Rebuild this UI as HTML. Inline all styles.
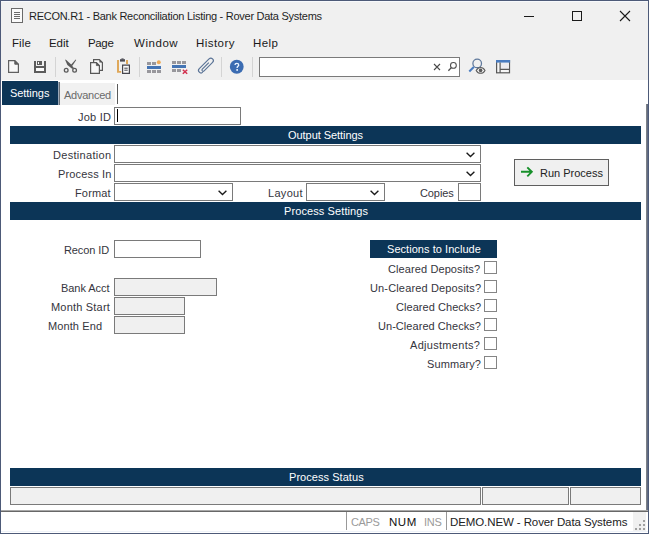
<!DOCTYPE html>
<html><head><meta charset="utf-8">
<style>
*{box-sizing:border-box}
html,body{margin:0;padding:0;width:649px;height:534px;overflow:hidden;background:#fff}
body{position:relative;font-family:"Liberation Sans",sans-serif;font-size:11px;line-height:13px;color:#35353d}
.a{position:absolute}
.t{position:absolute;white-space:nowrap;font-size:11px;line-height:13px}
.r{text-align:right}
.bar{position:absolute;background:#0c3557;color:#fff}
.in{position:absolute;border:1px solid #7a7a7a;background:#fff}
.ro{background:#f0f0f0}
.cb{position:absolute;width:13px;height:13px;border:1px solid #858585;background:#fff;left:484px}
.sep{position:absolute;width:1px;background:#d4d4d4;top:57px;height:20px}
.chev{position:absolute;width:10px;height:6px;overflow:visible}
</style></head><body>
<!-- window chrome -->
<div class="a" style="left:0;top:0;width:649px;height:80px;background:#f0f0f0"></div>
<div class="a" style="left:0;top:0;width:649px;height:534px;border:1px solid #4d5a78"></div>
<div class="a" style="left:1px;top:1px;width:647px;height:1px;background:#f7f9fc"></div>

<!-- title -->
<svg class="a" style="left:11px;top:8px" width="13" height="15" viewBox="0 0 13 15">
 <rect x="0.5" y="0.5" width="11" height="14" fill="#fafafa" stroke="#6a6a6a"/>
 <path d="M3 4.5h6M3 6.5h6M3 8.5h6M3 10.5h6" stroke="#6a6a6a" stroke-width="1"/>
</svg>
<div class="t" style="left:29px;top:10px;color:#1f1f1f;letter-spacing:-0.27px">RECON.R1 - Bank Reconciliation Listing - Rover Data Systems</div>
<!-- window buttons -->
<div class="a" style="left:524px;top:16px;width:10px;height:1px;background:#1a1a1a"></div>
<div class="a" style="left:572px;top:11px;width:10px;height:10px;border:1px solid #1a1a1a"></div>
<svg class="a" style="left:619px;top:10px" width="12" height="12" viewBox="0 0 12 12"><path d="M1 1L11 11M11 1L1 11" stroke="#1a1a1a" stroke-width="1.1"/></svg>

<!-- menu -->
<div class="t" style="left:12px;top:37px;color:#1a1a1a;font-size:11.5px;letter-spacing:0.1px">File</div>
<div class="t" style="left:49px;top:37px;color:#1a1a1a;font-size:11.5px;letter-spacing:-0.05px">Edit</div>
<div class="t" style="left:88px;top:37px;color:#1a1a1a;font-size:11.5px;letter-spacing:-0.35px">Page</div>
<div class="t" style="left:134px;top:37px;color:#1a1a1a;font-size:11.5px;letter-spacing:0.55px">Window</div>
<div class="t" style="left:196px;top:37px;color:#1a1a1a;font-size:11.5px;letter-spacing:0.45px">History</div>
<div class="t" style="left:253px;top:37px;color:#1a1a1a;font-size:11.5px;letter-spacing:0.4px">Help</div>

<!-- toolbar -->
<svg class="a" style="left:8px;top:60px" width="11" height="13" viewBox="0 0 11 13">
 <path d="M0.6 0.6H6.8L10.4 4.2V12.4H0.6Z" fill="#f9f9f9" stroke="#606060" stroke-width="1.2"/>
 <path d="M6.8 0.6V4.2H10.4Z" fill="#606060" stroke="#606060" stroke-width="1"/>
</svg>
<svg class="a" style="left:34px;top:61px" width="12" height="12" viewBox="0 0 12 12" shape-rendering="crispEdges">
 <rect x="0" y="0" width="2" height="12" fill="#5c5c5c"/>
 <rect x="10" y="0" width="2" height="12" fill="#5c5c5c"/>
 <rect x="0" y="5" width="12" height="2" fill="#5c5c5c"/>
 <rect x="0" y="10" width="12" height="2" fill="#5c5c5c"/>
 <rect x="3" y="0" width="5" height="4" fill="#5c5c5c"/>
 <rect x="4" y="1" width="1" height="2" fill="#fafafa"/>
 <rect x="2" y="7" width="8" height="3" fill="#fbfbfb"/>
</svg>
<div class="sep" style="left:55px"></div>
<svg class="a" style="left:62px;top:58px" width="17" height="17" viewBox="62 58 17 17">
 <path d="M65 59.6L66.3 59.9L70.9 64.3L73.8 67.7L72.4 68.9L67.4 65.1Z" fill="#5a5a5a"/>
 <path d="M75.6 59.6L76.2 60.1L72.6 65.6L71 66.3L70.4 65.6Z" fill="#5a5a5a"/>
 <circle cx="66.2" cy="70.3" r="1.85" fill="none" stroke="#5a5a5a" stroke-width="1.3"/>
 <circle cx="74.6" cy="70.3" r="1.85" fill="none" stroke="#5a5a5a" stroke-width="1.3"/>
</svg>
<svg class="a" style="left:88px;top:57px" width="17" height="18" viewBox="88 57 17 18">
 <path d="M93.6 59.6H99.4L102.4 62.6V70.4H93.6Z" fill="#f7f7f7" stroke="#585858" stroke-width="1.2"/>
 <path d="M99.4 59.6V62.6H102.4Z" fill="#585858"/>
 <path d="M90.6 62.6H96.4L99.4 65.6V73.4H90.6Z" fill="#f7f7f7" stroke="#585858" stroke-width="1.2"/>
 <path d="M96.4 62.6V65.6H99.4Z" fill="#585858" stroke="#585858" stroke-width="0.8"/>
</svg>
<svg class="a" style="left:115px;top:57px" width="17" height="18" viewBox="115 57 17 18">
 <path d="M117 60V72.8H121.2V71H119V60Z" fill="#dfa85a"/>
 <rect x="126" y="60" width="2" height="4" fill="#dfa85a"/>
 <rect x="120" y="59.2" width="5" height="2.4" fill="#4d4d55"/>
 <rect x="121.4" y="58.4" width="2.2" height="1.2" fill="#4d4d55"/>
 <path d="M122.6 65.2H129.4V73.4H122.6Z" fill="#fafafa" stroke="#45454d" stroke-width="1.2"/>
 <path d="M124.3 68.2H127.7M124.3 70.2H127.7" stroke="#45454d" stroke-width="1"/>
</svg>
<div class="sep" style="left:139px"></div>
<svg class="a" style="left:146px;top:59px" width="16" height="15" viewBox="146 59 16 15" shape-rendering="crispEdges">
 <rect x="147" y="62" width="4" height="3" fill="#98979c"/><rect x="152" y="62" width="4" height="3" fill="#98979c"/>
 <rect x="147" y="66" width="14" height="3" fill="#4474b4"/>
 <rect x="147" y="70" width="4" height="3" fill="#98979c"/><rect x="152" y="70" width="4" height="3" fill="#98979c"/><rect x="157" y="70" width="4" height="3" fill="#98979c"/>
</svg>
<svg class="a" style="left:155px;top:59px" width="7" height="7" viewBox="155 59 7 7"><circle cx="158.8" cy="62.3" r="1.95" fill="#eeab58"/></svg>
<svg class="a" style="left:171px;top:60px" width="18" height="16" viewBox="171 60 18 16">
 <g shape-rendering="crispEdges">
 <rect x="172" y="61" width="4" height="3" fill="#98979c"/><rect x="177" y="61" width="4" height="3" fill="#98979c"/><rect x="182" y="61" width="4" height="3" fill="#98979c"/>
 <rect x="172" y="65" width="14" height="3" fill="#4474b4"/>
 <rect x="172" y="69" width="4" height="3" fill="#98979c"/><rect x="177" y="69" width="4" height="3" fill="#98979c"/>
 </g>
 <path d="M182.8 69.8L187.2 73.8M187.2 69.8L182.8 73.8" stroke="#d2304e" stroke-width="1.5"/>
</svg>
<svg class="a" style="left:196px;top:55px" width="20" height="21" viewBox="-10 -10.5 20 21">
 <g transform="rotate(45)">
 <path d="M0 -4V5.2A1.25 1.25 0 0 0 2.5 5.2V-6.8A2.5 2.5 0 0 0 -2.5 -6.8V7A2.5 2.5 0 0 0 2.5 7" fill="none" stroke="#5a7396" stroke-width="1.15"/>
 </g>
</svg>
<div class="sep" style="left:221px"></div>
<svg class="a" style="left:228px;top:58px" width="18" height="18" viewBox="228 58 18 18">
 <circle cx="236.75" cy="66.75" r="6.9" fill="#3b6cb2"/>
 <path d="M235 65.1C235 63.9 235.8 63.4 236.8 63.4C237.9 63.4 238.7 64 238.7 65C238.7 66.3 237.1 66.4 237.1 68" fill="none" stroke="#eaf4ff" stroke-width="1.35"/>
 <rect x="236.3" y="69.1" width="1.7" height="1.7" fill="#eaf4ff"/>
</svg>
<div class="sep" style="left:252px"></div>
<div class="a" style="left:259px;top:57px;width:201px;height:20px;border:1px solid #7a7a7a;background:#fff"></div>
<svg class="a" style="left:432px;top:62px" width="10" height="10" viewBox="432 62 10 10"><path d="M434 64L440 70M440 64L434 70" stroke="#4a4a4a" stroke-width="1.1"/></svg>
<svg class="a" style="left:446px;top:60px" width="13" height="13" viewBox="446 60 13 13"><circle cx="453.4" cy="65.4" r="2.9" fill="none" stroke="#4e4e4e" stroke-width="1.05"/><path d="M451.3 67.6L448.4 70.8" stroke="#4e4e4e" stroke-width="1.3"/></svg>
<svg class="a" style="left:467px;top:57px" width="20" height="18" viewBox="467 57 20 18">
 <circle cx="477.2" cy="63.4" r="4.3" fill="none" stroke="#60799c" stroke-width="1.25"/>
 <path d="M473.8 67L469.3 71.5" stroke="#4a7cc0" stroke-width="2"/>
 <path d="M476.2 70.4C477.4 68.3 479 67.5 480.6 67.5C482.2 67.5 483.8 68.3 485 70.4C483.8 72.5 482.2 73.3 480.6 73.3C479 73.3 477.4 72.5 476.2 70.4Z" fill="#f4f4f4" stroke="#5a5a5a" stroke-width="1.1"/>
 <circle cx="480.6" cy="70.4" r="1.8" fill="#5a5a5a"/>
</svg>
<svg class="a" style="left:495px;top:59px" width="17" height="16" viewBox="495 59 17 16">
 <rect x="496.6" y="60.6" width="12.9" height="12.2" fill="#f7f7f7" stroke="#585858" stroke-width="1.2"/>
 <rect x="500.4" y="63" width="8.6" height="6" fill="#ececf0"/>
 <rect x="496" y="60" width="14.1" height="2.6" fill="#4a7cc0"/>
 <path d="M500.1 62.6V73M500.1 69.4H510" stroke="#585858" stroke-width="1.2"/>
</svg>

<!-- white content -->
<div class="a" style="left:1px;top:80px;width:647px;height:431px;background:#fff"></div>
<div class="a" style="left:646px;top:104px;width:1px;height:407px;background:#7c8086"></div>
<div class="a" style="left:647px;top:104px;width:1px;height:407px;background:#626c82"></div>

<!-- tabs -->
<div class="a" style="left:2px;top:81px;width:56px;height:24px;background:#0c3557"></div>
<div class="a" style="left:58px;top:82px;width:1px;height:23px;background:#9aa8b8"></div>
<div class="a" style="left:59px;top:82px;width:1px;height:23px;background:#6a7078"></div>
<div class="t" style="left:10px;top:87px;color:#fff;letter-spacing:-0.05px">Settings</div>
<div class="a" style="left:60px;top:83px;width:55px;height:22px;background:#f1f1f1"></div>
<div class="a" style="left:117px;top:84px;width:1px;height:20px;background:#5a5a5a"></div>
<div class="t" style="left:64px;top:89px;color:#6a6a6a;letter-spacing:-0.25px">Advanced</div>

<!-- Job ID -->
<div class="t" style="left:78px;top:111px;letter-spacing:0.25px">Job ID</div>
<div class="in" style="left:114px;top:107px;width:127px;height:18px"></div>
<div class="a" style="left:117px;top:109px;width:1px;height:13px;background:#000"></div>

<!-- Output settings -->
<div class="bar" style="left:10px;top:126px;width:631px;height:18px"></div>
<div class="t" style="left:288px;top:129px;color:#fff;letter-spacing:-0.05px">Output Settings</div>

<div class="t" style="left:53px;top:149px;letter-spacing:0.3px">Destination</div>
<div class="in" style="left:114px;top:145px;width:367px;height:18px"></div>
<div class="t" style="left:58px;top:168px;letter-spacing:0.15px">Process In</div>
<div class="in" style="left:114px;top:164px;width:367px;height:18px"></div>
<div class="t" style="left:75px;top:187px;letter-spacing:0.15px">Format</div>
<div class="in" style="left:114px;top:183px;width:119px;height:18px"></div>
<div class="t" style="left:268px;top:187px;letter-spacing:0.3px">Layout</div>
<div class="in" style="left:306px;top:183px;width:79px;height:18px"></div>
<div class="t" style="left:420px;top:187px;letter-spacing:-0.1px">Copies</div>
<div class="in" style="left:458px;top:183px;width:23px;height:18px"></div>
<svg class="chev" style="left:466px;top:152px" viewBox="0 0 10 6"><path d="M0.6 0.7L4.5 4.5L8.4 0.7" fill="none" stroke="#1a1a1a" stroke-width="1.35"/></svg>
<svg class="chev" style="left:466px;top:171px" viewBox="0 0 10 6"><path d="M0.6 0.7L4.5 4.5L8.4 0.7" fill="none" stroke="#1a1a1a" stroke-width="1.35"/></svg>
<svg class="chev" style="left:218px;top:190px" viewBox="0 0 10 6"><path d="M0.6 0.7L4.5 4.5L8.4 0.7" fill="none" stroke="#1a1a1a" stroke-width="1.35"/></svg>
<svg class="chev" style="left:370px;top:190px" viewBox="0 0 10 6"><path d="M0.6 0.7L4.5 4.5L8.4 0.7" fill="none" stroke="#1a1a1a" stroke-width="1.35"/></svg>

<!-- Run Process button -->
<div class="a" style="left:514px;top:159px;width:95px;height:27px;border:1px solid #5f5f5f;background:#f0f0f0"></div>
<svg class="a" style="left:520px;top:166px" width="14" height="12" viewBox="520 166 14 12"><path d="M521 171.8H532M527.3 167.3L531.8 171.8L527.3 176.3" fill="none" stroke="#17902a" stroke-width="1.9"/></svg>
<div class="t" style="left:540px;top:167px;color:#222">Run Process</div>

<!-- Process settings -->
<div class="bar" style="left:10px;top:202px;width:631px;height:18px"></div>
<div class="t" style="left:284px;top:205px;color:#fff;letter-spacing:0.1px">Process Settings</div>

<div class="t" style="left:64px;top:244px;letter-spacing:-0.1px">Recon ID</div>
<div class="in" style="left:114px;top:240px;width:87px;height:18px"></div>
<div class="t" style="left:61px;top:282px;letter-spacing:-0.05px">Bank Acct</div>
<div class="in ro" style="left:114px;top:278px;width:103px;height:18px"></div>
<div class="t" style="left:51px;top:301px;letter-spacing:0.2px">Month Start</div>
<div class="in ro" style="left:114px;top:297px;width:71px;height:18px"></div>
<div class="t" style="left:48px;top:320px;letter-spacing:0.1px">Month End</div>
<div class="in ro" style="left:114px;top:316px;width:71px;height:18px"></div>

<div class="bar" style="left:370px;top:240px;width:127px;height:18px"></div>
<div class="t" style="left:387px;top:243px;color:#fff;letter-spacing:0.05px">Sections to Include</div>
<div class="t" style="left:388px;top:263px;letter-spacing:0.1px">Cleared Deposits?</div>
<div class="cb" style="top:261px"></div>
<div class="t" style="left:370px;top:282px;letter-spacing:0.15px">Un-Cleared Deposits?</div>
<div class="cb" style="top:280px"></div>
<div class="t" style="left:396px;top:301px;letter-spacing:0.05px">Cleared Checks?</div>
<div class="cb" style="top:299px"></div>
<div class="t" style="left:378px;top:320px;letter-spacing:0.05px">Un-Cleared Checks?</div>
<div class="cb" style="top:318px"></div>
<div class="t" style="left:410px;top:339px;letter-spacing:0.3px">Adjustments?</div>
<div class="cb" style="top:337px"></div>
<div class="t" style="left:427px;top:358px;letter-spacing:0.1px">Summary?</div>
<div class="cb" style="top:356px"></div>

<!-- Process status -->
<div class="bar" style="left:10px;top:468px;width:631px;height:18px"></div>
<div class="t" style="left:289px;top:471px;color:#fff;letter-spacing:0.05px">Process Status</div>
<div class="in ro" style="left:10px;top:487px;width:471px;height:18px"></div>
<div class="in ro" style="left:482px;top:487px;width:87px;height:18px"></div>
<div class="in ro" style="left:570px;top:487px;width:71px;height:18px"></div>

<!-- status bar -->
<div class="a" style="left:1px;top:510px;width:647px;height:1px;background:#a8a8a8"></div>
<div class="a" style="left:1px;top:511px;width:647px;height:1px;background:#686868"></div>
<div class="a" style="left:1px;top:512px;width:647px;height:20px;background:#fff"></div>
<div class="a" style="left:346px;top:512px;width:1px;height:18px;background:#999"></div>
<div class="a" style="left:446px;top:512px;width:1px;height:18px;background:#999"></div>
<div class="t" style="left:351px;top:516px;color:#9a9a9a;letter-spacing:-0.4px">CAPS</div>
<div class="t" style="left:389px;top:516px;color:#111;font-size:11.5px;letter-spacing:0.55px">NUM</div>
<div class="t" style="left:424px;top:516px;color:#9a9a9a;letter-spacing:-0.3px">INS</div>
<div class="t" style="left:450px;top:516px;color:#222;font-size:11.5px;letter-spacing:-0.1px">DEMO.NEW - Rover Data Systems</div>
<div class="a" style="left:633px;top:512px;width:13px;height:19px;background:#f0f0f0"></div>
<svg class="a" style="left:635px;top:520px" width="11" height="11" viewBox="0 0 11 11" fill="#a0a0a0">
 <rect x="8" y="0" width="2" height="2"/><rect x="8" y="4" width="2" height="2"/><rect x="4" y="4" width="2" height="2"/>
 <rect x="8" y="8" width="2" height="2"/><rect x="4" y="8" width="2" height="2"/><rect x="0" y="8" width="2" height="2"/>
</svg>
<div class="a" style="left:1px;top:531px;width:647px;height:1px;background:#eef2f8"></div>
<div class="a" style="left:0;top:0;width:649px;height:534px;border:1px solid #4d5a78"></div>
</body></html>
